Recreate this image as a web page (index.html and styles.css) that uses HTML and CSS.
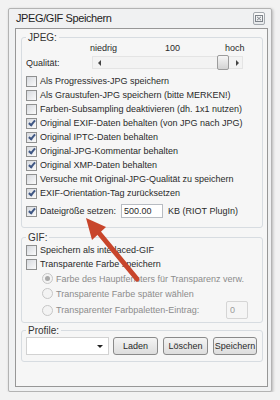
FILE: index.html
```html
<!DOCTYPE html>
<html lang="de">
<head>
    <meta charset="UTF-8">
    <meta name="viewport" content="width=device-width, initial-scale=1.0">
    <title>JPEG/GIF Speichern</title>
    <link rel="stylesheet" href="styles.css">
</head>
<body>
    <div class="window">
        <div class="titlebar">
            <span class="title">JPEG/GIF Speichern</span>
            <span class="close">
                <svg width="8" height="7" viewBox="0 0 8 7">
                    <rect x="0.5" y="0.5" width="7" height="6" fill="none" stroke="#7d838a"/>
                    <path d="M2 1.8 L6 5.2 M6 1.8 L2 5.2" stroke="#7d838a" stroke-width="1"/>
                </svg>
            </span>
        </div>

        <div class="client">
            <!-- JPEG -->
            <fieldset class="group jpeg">
                <legend>JPEG:</legend>
                <div class="scale"><span>niedrig</span><span>100</span><span>hoch</span></div>
                <div class="quality">
                    <span class="quality-label">Qualität:</span>
                    <div class="slider">
                        <span class="step"><span class="tri left"></span></span>
                        <span class="track"><span class="thumb"></span></span>
                        <span class="step"><span class="tri right"></span></span>
                    </div>
                </div>
                <div class="checks">
                    <div class="check"><span class="box"></span>Als Progressives-JPG speichern</div>
                    <div class="check"><span class="box"></span>Als Graustufen-JPG speichern (bitte MERKEN!)</div>
                    <div class="check"><span class="box"></span>Farben-Subsampling deaktivieren (dh. 1x1 nutzen)</div>
                    <div class="check"><span class="box on"></span>Original EXIF-Daten behalten (von JPG nach JPG)</div>
                    <div class="check"><span class="box on"></span>Original IPTC-Daten behalten</div>
                    <div class="check"><span class="box on"></span>Original-JPG-Kommentar behalten</div>
                    <div class="check"><span class="box on"></span>Original XMP-Daten behalten</div>
                    <div class="check"><span class="box"></span>Versuche mit Original-JPG-Qualität zu speichern</div>
                    <div class="check"><span class="box on"></span>EXIF-Orientation-Tag zurücksetzen</div>
                </div>
                <div class="check size-row">
                    <span class="box on"></span>Dateigröße setzen:
                    <input type="text" class="size-input" value="500.00">
                    <span class="unit">KB (RIOT PlugIn)</span>
                </div>
            </fieldset>

            <!-- GIF -->
            <fieldset class="group gif">
                <legend>GIF:</legend>
                <div class="check"><span class="box"></span>Speichern als interlaced-GIF</div>
                <div class="check"><span class="box"></span>Transparente Farbe speichern</div>
                <div class="radio"><span class="dot sel"></span>Farbe des Hauptfensters für Transparenz verw.</div>
                <div class="radio"><span class="dot"></span>Transparente Farbe später wählen</div>
                <div class="radio palette-row">
                    <span class="dot"></span>Transparenter Farbpaletten-Eintrag:
                    <input type="text" class="palette-input" value="0" disabled>
                </div>
            </fieldset>

            <!-- Profile -->
            <fieldset class="group profile">
                <legend>Profile:</legend>
                <div class="profile-row">
                    <div class="combo"><span class="caret"></span></div>
                    <button class="btn">Laden</button>
                    <button class="btn">Löschen</button>
                    <button class="btn">Speichern</button>
                </div>
            </fieldset>
        </div>
    </div>

    <!-- roter Pfeil -->
    <svg class="pointer" width="280" height="400" viewBox="0 0 280 400">
        <line x1="137" y1="279" x2="99" y2="233" stroke="#c8452b" stroke-width="5" stroke-linecap="round"/>
        <polygon points="86,218 106,227 92,240" fill="#c8452b"/>
    </svg>
</body>
</html>
```

FILE: styles.css
```css
body {
    margin: 0;
    font-family: "Liberation Sans", Arial, sans-serif;
    font-size: 9px;
    color: #2a2a2a;
    background-color: #f2f2f2;
}
.window {
    box-sizing: border-box;
    width: 264px;
    height: 384px;
    margin: 8px 0 0 8px;
    border: 1px solid #b3b3b3;
    border-radius: 2px;
    background-color: #f0f1f2;
    box-shadow: 1px 1px 3px rgba(0, 0, 0, 0.25);
}
.titlebar {
    display: flex;
    justify-content: space-between;
    align-items: flex-start;
    height: 19px;
    padding-left: 7px;
}
.title {
    font-size: 11px;
    letter-spacing: -0.4px;
    line-height: 19px;
    color: #1e1e1e;
}
.close {
    display: flex;
    justify-content: center;
    align-items: center;
    box-sizing: border-box;
    width: 12px;
    height: 13px;
    margin: 3px 6px 0 0;
    border: 1px solid #a4a9ae;
    border-radius: 2px;
    background: linear-gradient(#fafafa, #e6e8ea);
}
.client {
    box-sizing: border-box;
    width: 253px;
    height: 359px;
    margin-left: 6px;
    border: 1px solid #979797;
    background-color: #f6f6f6;
}
.group {
    margin: 0 4px 0 5px;
    padding: 0 0 0 4px;
    border: 1px solid #d7dce1;
    border-radius: 3px;
    min-width: 0;
}
.group legend {
    padding: 0 2px;
    line-height: 11px;
    font-size: 10px;
    color: #333;
}
.jpeg {
    margin-top: 3px;
    padding-bottom: 7px;
}
.gif {
    margin-top: 4px;
    padding-bottom: 3px;
}
.profile {
    margin-top: 2px;
    padding-top: 1px;
    padding-bottom: 6px;
}
.scale {
    display: grid;
    grid-template-columns: 75px 60px auto;
    padding-left: 64px;
    line-height: 11px;
    height: 11px;
}
.quality {
    display: flex;
    align-items: center;
    height: 17px;
}
.quality-label {
    width: 66px;
}
.slider {
    display: flex;
    box-sizing: border-box;
    width: 151px;
    height: 13px;
    border: 1px solid #e4e4e4;
    background-color: #f3f3f3;
}
.step {
    display: flex;
    justify-content: center;
    align-items: center;
    width: 10px;
}
.tri {
    width: 0;
    height: 0;
    border-top: 3px solid transparent;
    border-bottom: 3px solid transparent;
}
.tri.left {
    border-right: 3px solid #444;
    margin-left: 2px;
}
.tri.right {
    border-left: 3px solid #444;
}
.track {
    flex: 1;
    display: flex;
    justify-content: flex-end;
}
.thumb {
    box-sizing: border-box;
    width: 12px;
    height: 15px;
    margin: -2px 3px 0 0;
    border: 1px solid #9c9c9c;
    border-radius: 2px;
    background: linear-gradient(#f6f6f6, #d3d3d3);
}
.checks {
    margin-top: 3px;
}
.check, .radio {
    display: flex;
    align-items: center;
    height: 14px;
    white-space: nowrap;
}
.box {
    display: flex;
    justify-content: center;
    align-items: center;
    box-sizing: border-box;
    width: 11px;
    height: 11px;
    margin-right: 3px;
    border: 1px solid #8f9090;
    background: linear-gradient(135deg, #d6d9de, #fbfbfb);
}
.box.on::after {
    content: "";
    width: 2px;
    height: 5px;
    margin-top: -2px;
    border: solid #3f5784;
    border-width: 0 2px 2px 0;
    transform: rotate(40deg);
}
.size-row {
    height: 18px;
    margin-top: 2px;
}
.size-input {
    box-sizing: border-box;
    width: 42px;
    height: 14px;
    margin: 0 5px 0 5px;
    padding: 0 2px;
    border: 1px solid #b8bcc2;
    background-color: white;
    font-family: inherit;
    font-size: 9px;
    color: #2a2a2a;
}
.radio {
    height: 15px;
    padding-left: 16px;
    color: #8c8c8c;
}
.dot {
    display: flex;
    justify-content: center;
    align-items: center;
    box-sizing: border-box;
    width: 11px;
    height: 11px;
    margin-right: 3px;
    border: 1px solid #c6c6c6;
    border-radius: 50%;
    background-color: #f3f3f3;
}
.dot.sel::after {
    content: "";
    width: 5px;
    height: 5px;
    border-radius: 50%;
    background-color: #a9a9a9;
}
.palette-row {
    height: 18px;
}
.palette-input {
    box-sizing: border-box;
    width: 22px;
    height: 18px;
    margin: 0 14px 0 auto;
    padding: 0 3px;
    border: 1px solid #d5d5d5;
    border-radius: 2px;
    background-color: #f5f5f5;
    font-family: inherit;
    font-size: 9px;
    color: #9a9a9a;
}
.profile-row {
    display: flex;
    align-items: center;
    height: 18px;
}
.combo {
    display: flex;
    justify-content: flex-end;
    align-items: center;
    box-sizing: border-box;
    width: 83px;
    height: 18px;
    margin-right: 4px;
    padding-right: 5px;
    border: 1px solid #d2d2d2;
    background-color: white;
}
.caret {
    width: 0;
    height: 0;
    border-left: 3px solid transparent;
    border-right: 3px solid transparent;
    border-top: 3px solid #222;
}
.btn {
    box-sizing: border-box;
    width: 45px;
    height: 18px;
    margin-right: 5px;
    padding: 0;
    border: 1px solid #8a8a8a;
    border-radius: 3px;
    background: linear-gradient(#f4f4f4, #dddddd);
    font-family: inherit;
    font-size: 9px;
    color: #2a2a2a;
}
.btn:last-child {
    width: 44px;
    margin-right: 0;
}
.pointer {
    position: absolute;
    top: 0;
    left: 0;
    pointer-events: none;
}
```
